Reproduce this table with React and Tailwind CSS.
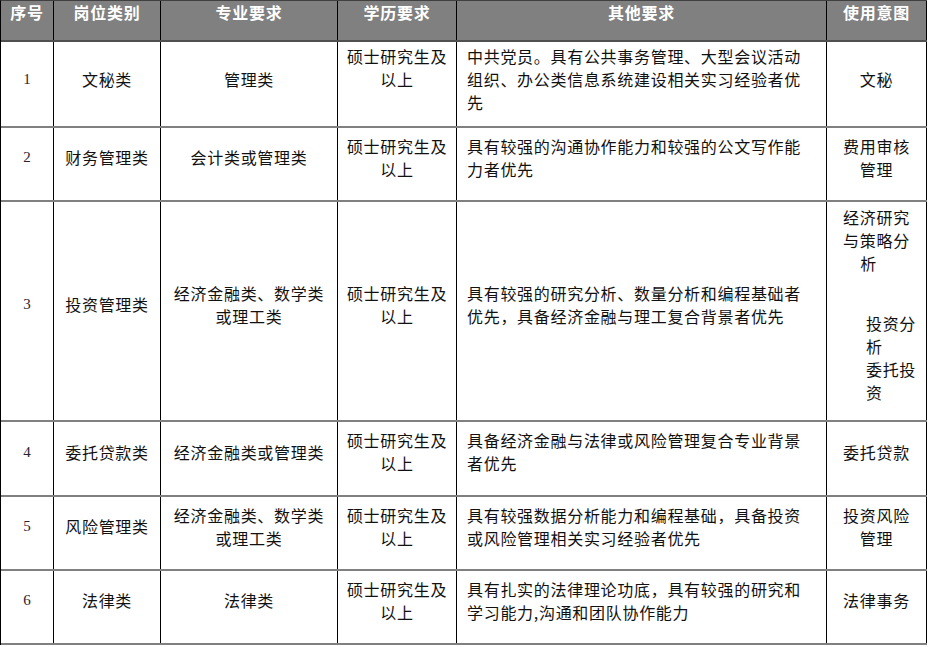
import React from "react";

const widths = ["w-[53px]", "w-[107px]", "w-[177px]", "w-[119px]", "w-[370px]", "w-[100px]"];

const headers = ["序号", "岗位类别", "专业要求", "学历要求", "其他要求", "使用意图"];

const rows = [
  {
    n: "1",
    h: "h-[86px]",
    pb: "pb-[9px]",
    type: ["文秘类"],
    major: ["管理类"],
    edu: ["硕士研究生及", "以上", "\u00a0"],
    other: ["中共党员。具有公共事务管理、大型会议活动", "组织、办公类信息系统建设相关实习经验者优", "先"],
    use: ["文秘"],
  },
  {
    n: "2",
    h: "h-[74px]",
    pb: "pb-[13px]",
    type: ["财务管理类"],
    major: ["会计类或管理类"],
    edu: ["硕士研究生及", "以上"],
    other: ["具有较强的沟通协作能力和较强的公文写作能", "力者优先"],
    use: ["费用审核", "管理"],
  },
  {
    n: "3",
    h: "h-[220px]",
    pb: "pb-[13px]",
    type: ["投资管理类"],
    major: ["经济金融类、数学类", "或理工类"],
    edu: ["硕士研究生及", "以上"],
    other: ["具有较强的研究分析、数量分析和编程基础者", "优先，具备经济金融与理工复合背景者优先"],
    use: null,
  },
  {
    n: "4",
    h: "h-[75px]",
    pb: "pb-[13px]",
    type: ["委托贷款类"],
    major: ["经济金融类或管理类"],
    edu: ["硕士研究生及", "以上"],
    other: ["具备经济金融与法律或风险管理复合专业背景", "者优先"],
    use: ["委托贷款"],
  },
  {
    n: "5",
    h: "h-[74px]",
    pb: "pb-[13px]",
    type: ["风险管理类"],
    major: ["经济金融类、数学类", "或理工类"],
    edu: ["硕士研究生及", "以上"],
    other: ["具有较强数据分析能力和编程基础，具备投资", "或风险管理相关实习经验者优先"],
    use: ["投资风险", "管理"],
  },
  {
    n: "6",
    h: "h-[74px]",
    pb: "pb-[13px]",
    type: ["法律类"],
    major: ["法律类"],
    edu: ["硕士研究生及", "以上"],
    other: ["具有扎实的法律理论功底，具有较强的研究和", "学习能力,沟通和团队协作能力"],
    use: ["法律事务"],
  },
];

const Lines = ({ lines }) => (
  <>
    {lines.map((l, i) => (
      <div key={i} className="whitespace-nowrap">
        {l}
      </div>
    ))}
  </>
);

// the investment row has two stacked blocks in the last column
const InvestUse = () => (
  <div className="flex flex-col">
    <div className="text-center">
      <div>经济研究</div>
      <div>与策略分</div>
      <div className="pr-[16px]">析</div>
    </div>
    <div className="h-[37px]" />
    <div className="pl-[29px] text-left">
      <div>投资分</div>
      <div>析</div>
      <div>委托投</div>
      <div>资</div>
    </div>
  </div>
);

export default function App() {
  return (
    <div className="w-[929px] h-[647px] overflow-hidden bg-white font-['Noto_Sans_CJK_SC','Liberation_Sans',sans-serif] text-[16px] leading-[23px] tracking-[0.7px] text-[#111]">
      <div className="w-[927px] border-l border-t border-l-black border-t-[#404040]">
        {/* ===== Header ===== */}
        <div className="flex h-[41px] bg-[#808080] border-b-2 border-[#505050]">
          {headers.map((t, i) => (
            <div
              key={t}
              className={`${widths[i]} shrink-0 border-r border-black text-center text-white font-bold`}
            >
              {t}
            </div>
          ))}
        </div>

        {/* ===== Body ===== */}
        {rows.map((r) => (
          <div key={r.n} className={`flex ${r.h} border-b-2 border-[#808080]`}>
            <div className={`${widths[0]} shrink-0 border-r border-black flex items-center justify-center ${r.pb} font-['Liberation_Serif',serif] text-[15px] tracking-normal text-[#2a2230]`}>
              {r.n}
            </div>
            <div className={`${widths[1]} shrink-0 border-r border-black flex flex-col justify-center items-center ${r.pb}`}>
              <Lines lines={r.type} />
            </div>
            <div className={`${widths[2]} shrink-0 border-r border-black flex flex-col justify-center items-center ${r.pb}`}>
              <Lines lines={r.major} />
            </div>
            <div className={`${widths[3]} shrink-0 border-r border-black flex flex-col justify-center items-center ${r.pb}`}>
              <Lines lines={r.edu} />
            </div>
            <div className={`${widths[4]} shrink-0 border-r border-black flex flex-col justify-center pl-[10px] ${r.pb}`}>
              <Lines lines={r.other} />
            </div>
            <div className={`${widths[5]} shrink-0 border-r border-black flex flex-col justify-center items-center ${r.pb}`}>
              {r.use ? <Lines lines={r.use} /> : <InvestUse />}
            </div>
          </div>
        ))}
      </div>
    </div>
  );
}
